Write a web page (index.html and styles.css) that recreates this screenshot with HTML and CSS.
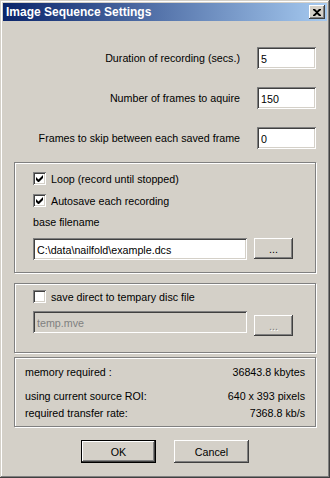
FILE: index.html
```html
<!DOCTYPE html>
<html lang="en">
<head>
  <meta charset="UTF-8">
  <title>Image Sequence Settings</title>
  <link rel="stylesheet" href="styles.css">
</head>
<body>
  <div class="window">
    <div class="titlebar">
      <span class="title">Image Sequence Settings</span>
      <span class="close">
        <svg width="8" height="7" viewBox="0 0 8 7"><path d="M0 0h2l2 2 2-2h2v1L5 3.5 8 6v1H6L4 5 2 7H0V6l3-2.5L0 1z" fill="#000"/></svg>
      </span>
    </div>

    <div class="content">
      <div class="field first">
        <label>Duration of recording (secs.)</label>
        <input class="textbox short" value="5">
      </div>
      <div class="field">
        <label>Number of frames to aquire</label>
        <input class="textbox short" value="150">
      </div>
      <div class="field">
        <label>Frames to skip between each saved frame</label>
        <input class="textbox short" value="0">
      </div>

      <div class="group g-save">
        <div class="check"><span class="box"><svg width="7" height="7" viewBox="0 0 7 7"><path d="M0 2v3l2 2h1l4-4V0L2.5 4.5z" fill="#000"/></svg></span>Loop (record until stopped)</div>
        <div class="check"><span class="box"><svg width="7" height="7" viewBox="0 0 7 7"><path d="M0 2v3l2 2h1l4-4V0L2.5 4.5z" fill="#000"/></svg></span>Autosave each recording</div>
        <div class="caption">base filename</div>
        <div class="file-row">
          <input class="textbox long" value="C:\data\nailfold\example.dcs">
          <button class="btn browse">...</button>
        </div>
      </div>

      <div class="group g-temp">
        <div class="check"><span class="box"></span>save direct to tempary disc file</div>
        <div class="file-row">
          <input class="textbox long" value="temp.mve" disabled>
          <button class="btn browse low" disabled>...</button>
        </div>
      </div>

      <div class="group g-info">
        <div class="info"><span>memory required :</span><span>36843.8 kbytes</span></div>
        <div class="info roi"><span>using current source ROI:</span><span>640 x 393 pixels</span></div>
        <div class="info rate"><span>required transfer rate:</span><span>7368.8 kb/s</span></div>
      </div>

      <div class="actions">
        <button class="btn default">OK</button>
        <button class="btn">Cancel</button>
      </div>
    </div>
  </div>
</body>
</html>
```

FILE: styles.css
```css
* { margin: 0; padding: 0; box-sizing: border-box; }
body { background: #d4d0c8; font-family: 'Liberation Sans', Arial, sans-serif; font-size: 10.7px; color: #000; }

.window { width: 330px; height: 478px; padding: 3px; background: #d4d0c8; box-shadow: inset -1px -1px #404040, inset 1px 1px #d4d0c8, inset -2px -2px #808080, inset 2px 2px #fff; }

.titlebar { height: 18px; display: flex; align-items: center; justify-content: space-between; padding: 0 2px 0 3px; background: linear-gradient(to right, #0a246a, #a6caf0); }
.title { color: #fff; font-weight: bold; font-size: 12px; font-family: 'Liberation Sans', Arial, sans-serif; }
.close { width: 16px; height: 14px; display: flex; align-items: center; justify-content: center; background: #d4d0c8; box-shadow: inset -1px -1px #404040, inset 1px 1px #fff, inset -2px -2px #808080; }

.content { padding: 0 11px; }

.field { height: 22px; display: flex; align-items: center; justify-content: flex-end; margin-top: 18px; }
.field.first { margin-top: 26px; }
.field label { margin-right: 17px; }

.textbox { height: 22px; border: none; outline: none; padding: 2px 4px 0; background: #fff; font: inherit; color: #000; box-shadow: inset 1px 1px #808080, inset -1px -1px #fff, inset 2px 2px #404040, inset -2px -2px #d4d0c8; }
.textbox.short { width: 59px; }
.textbox.long { width: 214px; }
.textbox:disabled { background: #d4d0c8; color: #808080; }

.group { border: 1px solid #808080; box-shadow: inset 1px 1px #fff, 1px 1px #fff; padding-left: 18px; }
.g-save { margin-top: 13px; padding-top: 9px; padding-bottom: 12px; }
.g-temp { margin-top: 10px; padding-top: 6px; padding-bottom: 16px; }
.g-info { margin-top: 4px; padding: 8px 10px 6px; }

.check { height: 13px; display: flex; align-items: center; margin-bottom: 9px; }
.box { width: 13px; height: 13px; margin-right: 5px; display: flex; align-items: center; justify-content: center; background: #fff; box-shadow: inset 1px 1px #808080, inset -1px -1px #fff, inset 2px 2px #404040, inset -2px -2px #d4d0c8; }
.caption { height: 13px; line-height: 13px; margin-bottom: 9px; }

.g-temp .check { margin-bottom: 8px; }
.file-row { display: flex; align-items: flex-start; }

.btn { width: 75px; height: 23px; border: none; background: #d4d0c8; font: inherit; color: #000; box-shadow: inset -1px -1px #404040, inset 1px 1px #fff, inset -2px -2px #808080; }
.btn.browse { width: 39px; height: 21px; margin-left: 7px; }
.btn.low { margin-top: 4px; }
.btn:disabled { color: #808080; text-shadow: 1px 1px #fff; }
.btn.default { box-shadow: inset 0 0 0 1px #000, inset -2px -2px #404040, inset 2px 2px #fff, inset -3px -3px #808080; }

.info { height: 13px; line-height: 13px; display: flex; justify-content: space-between; }
.info.roi { margin-top: 11px; }
.info.rate { margin-top: 4px; }

.actions { display: flex; justify-content: center; gap: 18px; margin-top: 13px; }
```
